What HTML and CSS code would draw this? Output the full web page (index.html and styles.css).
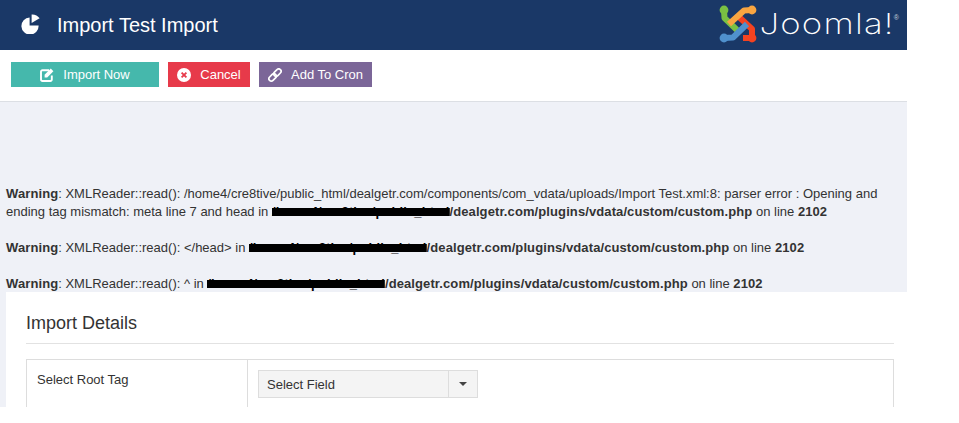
FILE: index.html
```html
<!DOCTYPE html>
<html lang="en">
<head>
<meta charset="utf-8">
<title>Import Test Import</title>
<link rel="stylesheet" href="styles.css">
</head>
<body>
<div class="app">
  <header class="topbar">
    <div class="title-group">
      <svg class="pie" viewBox="0 0 20 20" aria-hidden="true">
        <path d="M8.6 3.4V11.6H17.6A8.6 8.6 0 1 1 8.6 3.4Z" fill="#fff"/>
        <path d="M10.6 0.4A9 9 0 0 1 18.6 4.3L10.6 9Z" fill="#fff"/>
      </svg>
      <h1 class="page-title">Import Test Import</h1>
    </div>
    <div class="brand">
      <svg class="brand-mark" viewBox="0 0 36 36" aria-hidden="true">
        <path d="M4 4L4.5 12L17 24" class="arm arm-green"/>
        <path d="M23 32L32 32L32 23L19 11" class="arm arm-red"/>
        <path d="M32 4L24 4.5L9 18" class="arm arm-orange"/>
        <path d="M4 32L13 31.5L27 18" class="arm arm-blue"/>
        <circle cx="4" cy="4" r="4.4" fill="#7ac143"/>
        <circle cx="32" cy="4" r="4.4" fill="#f9a541"/>
        <circle cx="4" cy="32" r="4.4" fill="#5091cd"/>
        <circle cx="32" cy="32" r="4.4" fill="#f44321"/>
      </svg>
      <span class="brand-name">Joomla!</span><span class="brand-reg">®</span>
    </div>
  </header>

  <nav class="toolbar">
    <button class="btn btn-import" type="button">
      <svg class="btn-icon" viewBox="0 0 14 14" aria-hidden="true">
        <path d="M9 2.2H2.4A1.4 1.4 0 0 0 1 3.6V11.6A1.4 1.4 0 0 0 2.4 13H10.4A1.4 1.4 0 0 0 11.8 11.6V7.5" fill="none" stroke="#fff" stroke-width="1.9"/>
        <path d="M4.6 6.8L10.8 0.6L13.4 3.2L7.2 9.4H4.6Z" fill="#fff"/>
      </svg>
      <span>Import Now</span>
    </button>
    <button class="btn btn-cancel" type="button">
      <svg class="btn-icon" viewBox="0 0 14 14" aria-hidden="true">
        <circle cx="7" cy="7" r="7" fill="#fff"/>
        <path d="M4.6 4.6L9.4 9.4M9.4 4.6L4.6 9.4" stroke="#e73a4a" stroke-width="1.8"/>
      </svg>
      <span>Cancel</span>
    </button>
    <button class="btn btn-cron" type="button">
      <svg class="btn-icon" viewBox="0 0 14 14" aria-hidden="true">
        <g transform="rotate(-45 7 7)" fill="none" stroke="#fff" stroke-width="1.7">
          <rect x="-0.6" y="4.6" width="8.4" height="4.8" rx="2.4"/>
          <rect x="6.2" y="4.6" width="8.4" height="4.8" rx="2.4"/>
        </g>
      </svg>
      <span>Add To Cron</span>
    </button>
  </nav>

  <section class="warnings">
    <p class="warning"><b>Warning</b>: XMLReader::read(): /home4/cre8tive/public_html/dealgetr.com/components/com_vdata/uploads/Import Test.xml:8: parser error : Opening and ending tag mismatch: meta line 7 and head in <b><span class="redacted">/home4/cre8tive/public_html</span>/dealgetr.com/plugins/vdata/custom/custom.php</b> on line <b>2102</b></p>
    <p class="warning"><b>Warning</b>: XMLReader::read(): &lt;/head&gt; in <b><span class="redacted">/home4/cre8tive/public_html</span>/dealgetr.com/plugins/vdata/custom/custom.php</b> on line <b>2102</b></p>
    <p class="warning"><b>Warning</b>: XMLReader::read(): ^ in <b><span class="redacted">/home4/cre8tive/public_html</span>/dealgetr.com/plugins/vdata/custom/custom.php</b> on line <b>2102</b></p>
  </section>

  <main class="panel">
    <h2 class="panel-title">Import Details</h2>
    <div class="form-table">
      <div class="form-label">Select Root Tag</div>
      <div class="form-field">
        <div class="select">
          <span class="select-value">Select Field</span>
          <span class="select-arrow"><i class="caret"></i></span>
        </div>
      </div>
    </div>
  </main>
</div>
</body>
</html>
```
FILE: styles.css
```css
* { box-sizing: border-box; }
html, body { margin: 0; padding: 0; background: #fff; }
body { font-family: "Liberation Sans", Arial, sans-serif; color: #333; height: 423px; overflow: hidden; }

.app { width: 907px; height: 407px; overflow: hidden; background: #eff1f7; display: flex; flex-direction: column; }

.topbar { flex: none; height: 50px; background: #1a3867; color: #fff; display: flex; align-items: center; justify-content: space-between; padding-left: 21px; padding-right: 8px; }
.title-group { display: flex; align-items: center; gap: 16px; }
.pie { width: 20px; height: 20px; display: block; margin-top: -3px; }
.page-title { margin: 0; font-size: 20px; font-weight: 400; line-height: 24px; color: #fff; }

.brand { display: flex; align-items: center; height: 50px; }
.brand-mark { width: 36px; height: 36px; margin-right: 26px; margin-top: -2px; overflow: visible; flex: none; }
.arm { fill: none; stroke-width: 6; stroke-linejoin: round; }
.arm-green { stroke: #7ac143; }
.arm-orange { stroke: #f9a541; }
.arm-blue { stroke: #5091cd; }
.arm-red { stroke: #f44321; }
.brand-name { font-family: "Inter", sans-serif; font-weight: 200; font-size: 29px; letter-spacing: 1px; line-height: 50px; color: #fff; margin-top: -3px; transform: scaleX(1.2); transform-origin: right center; }
.brand-reg { font-size: 7px; line-height: 8px; align-self: flex-start; margin-top: 14px; margin-left: -1px; color: #c8d0dc; }

.toolbar { flex: none; height: 52px; background: #fff; border-bottom: 1px solid #dcdfe4; display: flex; align-items: flex-start; gap: 9px; padding: 12px 0 0 11px; }
.btn { height: 25px; border: 0; margin: 0; padding: 0; color: #fff; font: 13px/25px "Liberation Sans", Arial, sans-serif; display: flex; align-items: center; justify-content: center; gap: 9px; }
.btn-icon { width: 14px; height: 14px; display: block; flex: none; }
.btn-import { width: 148px; background: #45b8ac; }
.btn-cancel { width: 82px; background: #e73a4a; }
.btn-cron { width: 113px; background: #7b6698; }

.warnings { flex: none; height: 190px; padding: 83px 26px 0 6px; font-size: 13px; line-height: 18px; color: #333; }
.warning { margin: 0 0 18px; }
.warning b { letter-spacing: .1px; color: #333; }
.redacted { color: #000; background: linear-gradient(#000, #000) center 55% / 100% 8px no-repeat; }

.panel { flex: 1; margin-left: 6px; background: #fff; padding: 20px 13px 0 20px; min-height: 0; }
.panel-title { margin: 0; height: 32px; font-size: 18px; line-height: 22px; font-weight: 400; color: #333; border-bottom: 1px solid #e2e2e2; }
.form-table { margin-top: 15px; height: 80px; border: 1px solid #ddd; display: grid; grid-template-columns: 221px 1fr; font-size: 13px; color: #333; }
.form-label { padding: 11px 10px; line-height: 18px; border-right: 1px solid #ddd; }
.form-field { padding: 10px; }
.select { width: 220px; height: 28px; border: 1px solid #ddd; background: #f4f4f4; display: flex; align-items: stretch; }
.select-value { flex: 1; padding-left: 8px; line-height: 27px; }
.select-arrow { width: 29px; border-left: 1px solid #ddd; display: flex; align-items: center; justify-content: center; }
.caret { width: 0; height: 0; border-left: 4px solid transparent; border-right: 4px solid transparent; border-top: 4px solid #444; }
```
